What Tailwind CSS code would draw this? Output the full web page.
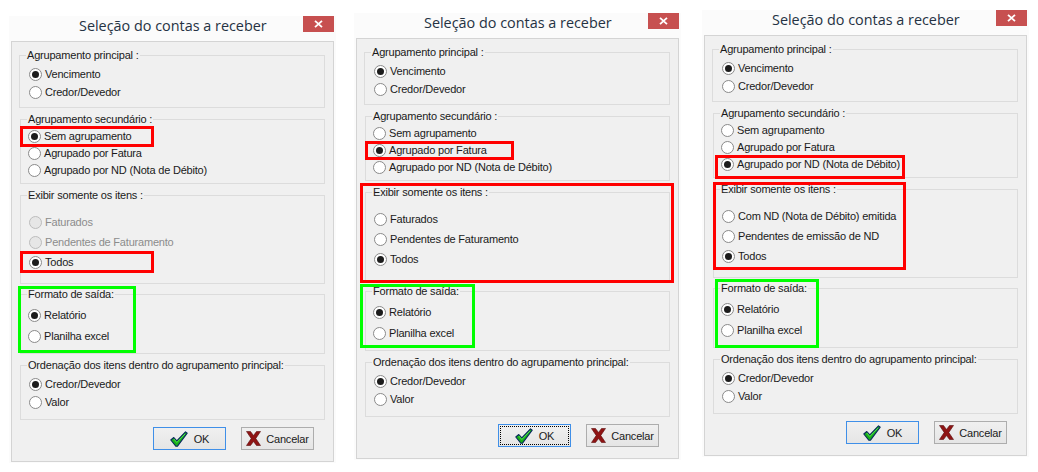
<!DOCTYPE html>
<html lang="pt-BR">
<head>
  <meta charset="UTF-8" />
  <title>Seleção do contas a receber</title>
  <script src="https://cdn.jsdelivr.net/npm/@tailwindcss/browser@4"></script>
</head>
<body class="bg-white">
  <div id="page" class="relative w-[1038px] h-[472px] overflow-hidden flex font-['Liberation_Sans',sans-serif] text-[11px] leading-[14px] tracking-[-0.2px] text-[#1a1a1a]">
    <div id="d1" class="w-[327px] ml-[9px] mt-[16px] h-[447px] bg-[#fbfbfb]"></div>
    <div id="d2" class="w-[327px] ml-[18px] mt-[13px] h-[447px] bg-[#fbfbfb]"></div>
    <div id="d3" class="w-[327px] ml-[21px] mt-[10px] h-[447px] bg-[#fbfbfb]"></div>

    <!-- marcacoes vermelhas e verdes -->
    <div class="absolute left-[20px] top-[126px] w-[134px] h-[21px] border-[3px] border-[#ff0000]"></div>
    <div class="absolute left-[20px] top-[251px] w-[134px] h-[22px] border-[3px] border-[#ff0000]"></div>
    <div class="absolute left-[18px] top-[286px] w-[118px] h-[67px] border-[3px] border-[#00ff00]"></div>
    <div class="absolute left-[365px] top-[141px] w-[149px] h-[19px] border-[3px] border-[#ff0000]"></div>
    <div class="absolute left-[360px] top-[183px] w-[314px] h-[100px] border-[3px] border-[#ff0000]"></div>
    <div class="absolute left-[360px] top-[284px] w-[115px] h-[64px] border-[3px] border-[#00ff00]"></div>
    <div class="absolute left-[715px] top-[155px] w-[190px] h-[24px] border-[3px] border-[#ff0000]"></div>
    <div class="absolute left-[713px] top-[182px] w-[193px] h-[88px] border-[3px] border-[#ff0000]"></div>
    <div class="absolute left-[715px] top-[279px] w-[104px] h-[69px] border-[3px] border-[#00ff00]"></div>
  </div>

  <script>
    // layout of each group box, top to bottom
    const boxes = [
      { box: 'w-[306px] h-[53px] ml-[7px] mt-[13px]', rows: 'pt-[5px] pl-[9px] gap-[4px]', legend: 'ml-[6px]' },
      { box: 'w-[305px] h-[65px] ml-[8px] mt-[11px]', rows: 'pt-[3px] pl-[7px] gap-[3px]', legend: 'ml-[6px]' },
      { box: 'w-[305px] h-[89px] ml-[8px] mt-[11px]', rows: 'pt-[13px] pl-[8px] gap-[6px]', legend: 'ml-[6px]' },
      { box: 'w-[305px] h-[60px] ml-[8px] mt-[10px]', rows: 'pt-[7px] pl-[7px] gap-[7px]', legend: 'ml-[6px]' },
      { box: 'w-[305px] h-[55px] ml-[8px] mt-[11px]', rows: 'pt-[5px] pl-[8px] gap-[4px]', legend: 'ml-[6px]' }
    ];

    const dialogs = [
      { target: 'd1', focus: false, groups: [
        ['Agrupamento principal :', [['Vencimento', 1], ['Credor/Devedor', 0]]],
        ['Agrupamento secundário :', [['Sem agrupamento', 1], ['Agrupado por Fatura', 0], ['Agrupado por ND (Nota de Débito)', 0]]],
        ['Exibir somente os itens :', [['Faturados', 2], ['Pendentes de Faturamento', 2], ['Todos', 1]]],
        ['Formato de saída:', [['Relatório', 1], ['Planilha excel', 0]]],
        ['Ordenação dos itens dentro do agrupamento principal:', [['Credor/Devedor', 1], ['Valor', 0]]]
      ]},
      { target: 'd2', focus: true, groups: [
        ['Agrupamento principal :', [['Vencimento', 1], ['Credor/Devedor', 0]]],
        ['Agrupamento secundário :', [['Sem agrupamento', 0], ['Agrupado por Fatura', 1], ['Agrupado por ND (Nota de Débito)', 0]]],
        ['Exibir somente os itens :', [['Faturados', 0], ['Pendentes de Faturamento', 0], ['Todos', 1]]],
        ['Formato de saída:', [['Relatório', 1], ['Planilha excel', 0]]],
        ['Ordenação dos itens dentro do agrupamento principal:', [['Credor/Devedor', 1], ['Valor', 0]]]
      ]},
      { target: 'd3', focus: false, groups: [
        ['Agrupamento principal :', [['Vencimento', 1], ['Credor/Devedor', 0]]],
        ['Agrupamento secundário :', [['Sem agrupamento', 0], ['Agrupado por Fatura', 0], ['Agrupado por ND (Nota de Débito)', 1]]],
        ['Exibir somente os itens :', [['Com ND (Nota de Débito) emitida', 0], ['Pendentes de emissão de ND', 0], ['Todos', 1]]],
        ['Formato de saída:', [['Relatório', 1], ['Planilha excel', 0]]],
        ['Ordenação dos itens dentro do agrupamento principal:', [['Credor/Devedor', 1], ['Valor', 0]]]
      ]}
    ];

    // state: 0 off, 1 on, 2 disabled
    function radio(text, state) {
      const circle = state === 2
        ? 'bg-[#e6e6e6] border-[#bcbcbc]'
        : 'bg-white border-[#8a8a8a]';
      const dot = state === 1 ? '<span class="w-[7px] h-[7px] rounded-full bg-[#1c1c1c]"></span>' : '';
      const color = state === 2 ? 'text-[#8c8c8c]' : '';
      return `<div class="flex items-center h-[14px] gap-[3px] ${color}">
        <span class="w-[13px] h-[13px] rounded-full border flex items-center justify-center shrink-0 ${circle}">${dot}</span>
        <span class="whitespace-nowrap">${text}</span>
      </div>`;
    }

    function group(g, i) {
      const b = boxes[i];
      return `<div class="border border-[#dcdcdc] ${b.box}">
        <div class="-mt-[8px] w-fit h-[14px] px-px bg-[#f0f0f0] whitespace-nowrap ${b.legend}">${g[0]}</div>
        <div class="flex flex-col ${b.rows}">${g[1].map(r => radio(r[0], r[1])).join('')}</div>
      </div>`;
    }

    const check = `<svg width="18" height="16" viewBox="0 0 18 16" class="shrink-0"><path d="M0.8 9 L3.8 6.5 L6.8 9.8 L15.5 0.8 L17.2 2.2 L7.5 15.2 L5.8 15.2 Z" fill="#18b018" stroke="#0a2a5e" stroke-width="1.1" stroke-linejoin="round"/><path d="M3.8 8 L6.8 11.5 L15 3" fill="none" stroke="#4fe04f" stroke-width="1"/></svg>`;
    const cross = `<svg width="15" height="15" viewBox="0 0 15 15" class="shrink-0"><path d="M0.5 0.5 H4.5 L7.5 4.5 L10.5 0.5 H14.5 L9.8 7.5 L14.5 14.5 H10.5 L7.5 10.5 L4.5 14.5 H0.5 L5.2 7.5 Z" fill="#8f1414" stroke="#5a0d0d" stroke-width="0.6"/></svg>`;

    function dialog(d) {
      const focus = d.focus ? '<span class="absolute inset-[1px] border border-dotted border-black"></span>' : '';
      return `<div class="flex justify-between h-[25px]">
        <div class="flex-1 pl-[70px] font-['Open_Sans',sans-serif] text-[14.4px] leading-[20px] tracking-normal text-[#253243]">Seleção do contas a receber</div>
        <div class="w-[31px] h-[16px] mr-[2px] bg-[#c75050] flex items-center justify-center">
          <svg width="9" height="8" viewBox="0 0 9 8"><path d="M1 0.8 L8 7.2 M8 0.8 L1 7.2" stroke="#fff" stroke-width="1.8"/></svg>
        </div>
      </div>
      <div class="ml-[2px] w-[323px] h-[421px] border border-[#d4d4d4] bg-[#f0f0f0]">
        ${d.groups.map(group).join('')}
        <div class="flex justify-end gap-[15px] mt-[7px] pr-[19px]">
          <button class="relative w-[73px] h-[23px] border border-[#3f8fe8] bg-gradient-to-b from-[#f0f0f0] to-[#e5e5e5] flex items-center justify-center gap-[6px]">${focus}${check}<span>OK</span></button>
          <button class="w-[73px] h-[23px] border border-[#adadad] bg-gradient-to-b from-[#f0f0f0] to-[#e5e5e5] flex items-center justify-center gap-[5px]">${cross}<span>Cancelar</span></button>
        </div>
      </div>`;
    }

    dialogs.forEach(d => { document.getElementById(d.target).innerHTML = dialog(d); });
  </script>
</body>
</html>
